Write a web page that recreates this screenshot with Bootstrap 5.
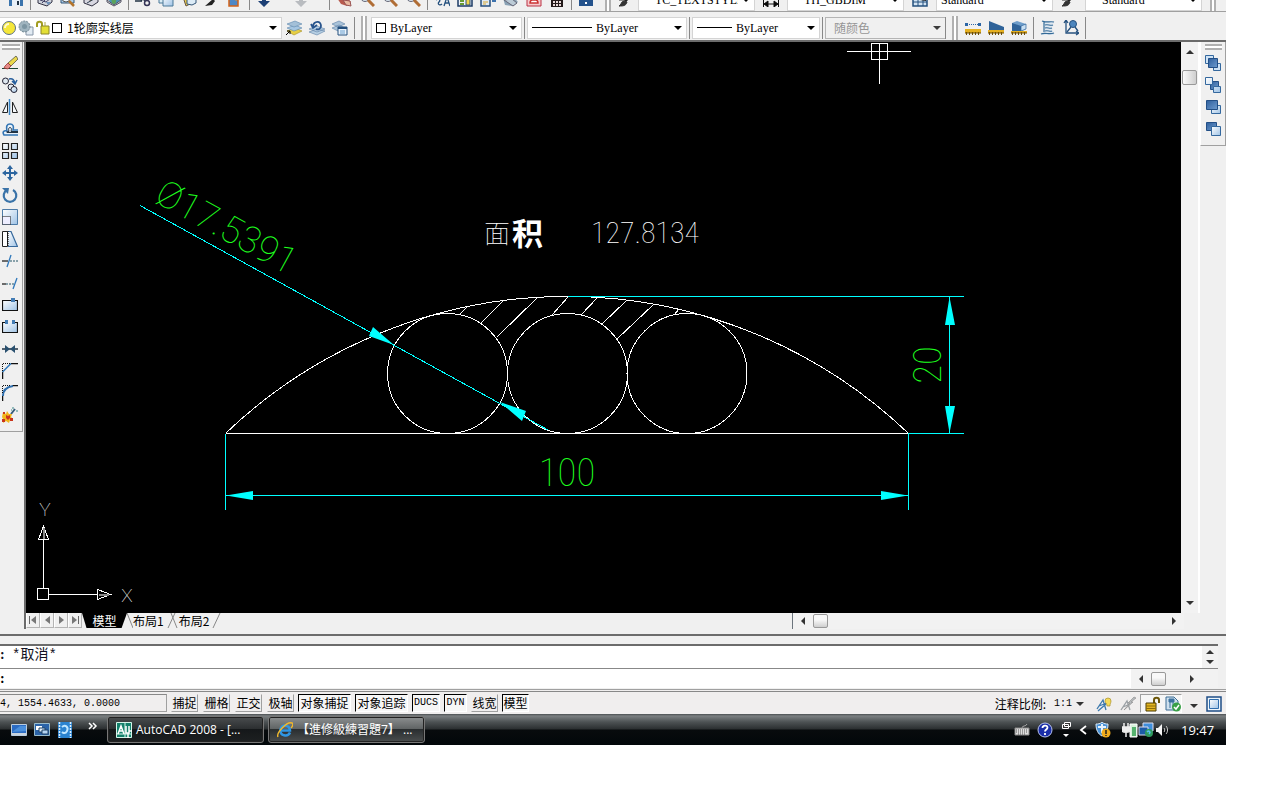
<!DOCTYPE html>
<html lang="zh-CN">
<head>
<meta charset="utf-8">
<meta name="viewport" content="width=device-width, initial-scale=1">
<title>AutoCAD 2008</title>
<link href="https://cdn.jsdelivr.net/npm/bootstrap@5.3.0/dist/css/bootstrap.min.css" rel="stylesheet">
<script src="https://cdn.jsdelivr.net/npm/bootstrap@5.3.0/dist/js/bootstrap.bundle.min.js"></script>
<style>
:root{--face:#f0f0f0;--edge:#a0a0a0;--dark:#6c6c6c}
body{background:#fff;font-family:"Liberation Serif","Noto Sans CJK SC",serif;font-size:12px;line-height:14px;color:#000;padding:0 54px 55px 0}
.app{height:calc(100vh - 55px);background:var(--face)}
button{padding:0;border:0;background:none;color:inherit;font:inherit;line-height:inherit}
svg{display:block}
.tb{width:16px;height:16px;flex:none}
.tb svg,.ic{width:16px;height:16px;flex:none}
.tiny{width:7px;height:16px;flex:none}
.bar-top{height:12px;overflow:hidden;border-bottom:1px solid var(--edge)}
.bar-props{height:30px;padding-top:3px;border-bottom:2px solid var(--dark)}
.tools{gap:7px}
.rule{width:1px;height:22px;background:#888;flex:none;margin:0 -1px}
.rule.wide{margin:0 2px}
.grip{width:6px;height:24px;border-left:2px solid #b0b0b0;border-right:2px solid #b0b0b0;background:#fff;flex:none}
.grip-h{height:6px;border-top:2px solid #b0b0b0;border-bottom:2px solid #b0b0b0;background:#fff}
.field{background:#fff;border:1px solid #d4d4d4;height:22px;flex:none}
.field select{border:0;outline:0;padding:0 16px 0 0;min-width:0;height:20px;font:inherit;color:inherit;appearance:none;background:transparent url("data:image/svg+xml,%3Csvg xmlns='http://www.w3.org/2000/svg' width='8' height='4'%3E%3Cpath d='M0 0h8L4 4z'/%3E%3C/svg%3E") no-repeat right 4px center}
.field.off{background:var(--face);color:#8a8a8a;border-color:#b4b4b4}
.field.off select{opacity:.75;color:#777}
.field select.cjk,.cjk{font-family:"Noto Sans CJK SC",sans-serif}
.w-layer{width:282px;padding-left:1px;gap:1px}.w-color{width:151px}.w-ltype{width:160px}.w-lw{width:128px}.w-plot{width:121px}
.w-style{width:117px}
.swatch{width:10px;height:10px;border:1px solid #000;background:#fff;flex:none}
.rail-left{width:26px;border-right:2px solid var(--dark);flex:none}
.rail-left .dock{width:23px;height:390px;border-right:1px solid var(--edge);border-bottom:1px solid var(--edge);padding:2px 2px 0 2px}
.rail-right{width:26px;flex:none}
.rail-right .dock{height:104px;border:1px solid var(--edge);border-top:0;border-left-color:#fff;padding:2px 3px 0 4px}
.rail-left .tools,.rail-right .tools{gap:6px;padding-top:5px}
.view{background:#000;min-width:0}
.sbar{background:#f2f2f2;flex:none}
.sbar.v{width:19px;border-right:2px solid #fff}
.sbar.foot{width:32%}
.thumb{background:linear-gradient(90deg,#fbfbfb,#cfcfcf);border:1px solid #999;border-radius:2px;width:15px;height:15px;flex:none}
.thumb.h{background:linear-gradient(#f8f8f8 40%,#cfcfcf);height:14px}
.arr{width:0;height:0;border:4px solid transparent;flex:none}
.arr.u{border-top:0;border-bottom-color:#333}.arr.d{border-bottom:0;border-top-color:#333}
.arr.l{border-left:0;border-right-color:#333}.arr.r{border-right:0;border-left-color:#333}
.tabs{height:16px}
.tabs .vcr{width:14px;height:15px;border:1px solid #b4b4b4;border-top:0;border-left-color:#fff;display:grid;place-items:center}
.tabs .sheet{height:15px;width:46px;font-family:"Noto Sans CJK SC",sans-serif;text-align:center}
.tabs .on{background:#000;color:#fff;clip-path:polygon(0 0,100% 0,88% 100%,10% 100%);width:45px}
.cmdwrap{border-top:2px solid var(--dark);padding-top:8px;margin-top:5px}
.hist{height:25px;border-top:2px solid var(--dark);background:#fff;border-bottom:1px solid #888}
.line{font:14px/18px "Liberation Mono","Noto Sans CJK SC",monospace;color:#112}
.colon{display:inline-block;width:12px;font:700 14px/18px "Liberation Serif",serif}
.prompt{height:19px;background:#fff}
.prompt input{border:0;outline:0;background:transparent;padding:0;min-width:0}
.status{height:25px;margin-top:1px;border-top:1px solid var(--edge);background:#f0eeee}
.status .inner{border-top:1px solid #888;margin-top:1px;padding-top:2px;height:22px}
.coord{width:167px;height:18px;border:1px solid var(--edge);border-left:0;border-top-color:#888;font:10px/18px "Liberation Mono",monospace;white-space:pre}
.tg{height:18px;border:1px solid transparent;border-right-color:var(--edge);border-bottom-color:var(--edge);font:12px/16px "Noto Sans CJK SC",sans-serif;white-space:nowrap;flex:none;text-align:center}
.tg.on{border:1px solid #fff;border-left-color:#000;border-top-color:#000;background:#f6f6f6}
.tg.mono{font:10px/16px "Liberation Mono",monospace}
.t2{width:27px}.t4{width:53px}.t-ducs{width:28px}.t-dyn{width:23px}
.toggles{gap:5px;margin-left:4px}
.toggles.pack{gap:4px}
.scale{font:10px/16px "Liberation Mono",monospace;margin-right:12px}
.pressed{border:1px solid var(--edge);border-right-color:#fff;border-bottom-color:#fff;background:#f6f6f6;height:19px;width:42px}
.task{height:31px;background:linear-gradient(#4a4f52 0,#7b7f81 2px,#4d5254 8px,#2b2f31 15px,#080b0d 16px,#02070a);color:#fff;font-family:"Open Sans","Noto Sans CJK TC",sans-serif}
.task .win{height:27px;width:157px;border:1px solid #777;border-radius:3px;background:linear-gradient(#4a4d4f,#2b2e30 48%,#15181a 50%,#1d2021);box-shadow:inset 0 0 0 1px #222;font-size:12px;padding:0 8px;white-space:nowrap}
.task .win.idle{background:linear-gradient(#8c8f90,#5f6364 48%,#2a2e30 50%,#4a4d4e)}
.quick{width:107px;padding-left:11px;gap:7px}
.clock{font-size:13px;width:37px}
.tray-a{gap:7px;margin-right:11px}
</style>
</head>
<body>
<svg width="0" height="0" class="position-absolute" aria-hidden="true">
<defs>
<linearGradient id="gb" x1="0" y1="0" x2="1" y2="1"><stop offset="0" stop-color="#fff"/><stop offset="1" stop-color="#9fc3e6"/></linearGradient>
<linearGradient id="gd" x1="0" y1="0" x2="1" y2="1"><stop offset="0" stop-color="#2f5f9c"/><stop offset="1" stop-color="#6d9bcf"/></linearGradient>
<symbol id="i-save" viewBox="0 0 16 16"><path d="M1 1h14v14H1z" fill="#3b74ad"/><path d="M4 9h8v6H4z" fill="#e8f0f8"/><path d="M9 10h2v4H9z" fill="#234"/><path d="M3 1h10v6H3z" fill="#cfe1f2"/></symbol>
<symbol id="i-print" viewBox="0 0 16 16"><path d="M1 8l5-4 9 2v5l-5 4-9-3z" fill="#cfd3dc" stroke="#334"/><path d="M3 9l6 2 5-4M5 12l6-6" stroke="#446" fill="none"/><path d="M9 11h5l-3 3z" fill="#6a8fb8"/></symbol>
<symbol id="i-preview" viewBox="0 0 16 16"><path d="M1 2h13v10H1z" fill="#a9cdea" stroke="#357"/><circle cx="6" cy="7" r="4" fill="#eef6fc" stroke="#555"/><path d="M9 10l5 5" stroke="#b3742c" stroke-width="2.500"/></symbol>
<symbol id="i-publish" viewBox="0 0 16 16"><path d="M1 9l5-4 9 2v4l-6 4-8-3z" fill="#d7d7e0" stroke="#334"/><path d="M4 7l5-5 4 3-5 5z" fill="#e9b93b" stroke="#653"/><path d="M4 12l7-4" stroke="#345"/></symbol>
<symbol id="i-globe" viewBox="0 0 16 16"><circle cx="9" cy="8" r="6" fill="#4793b8"/><path d="M1 9l7 5 7-5v2l-7 4-7-4z" fill="#ddd" stroke="#556"/><path d="M5 7c3 0 6 1 5 4s-3 2-4 1z" fill="#5ba35b"/></symbol>
<symbol id="i-cut" viewBox="0 0 16 16"><path d="M3 2l7 8M12 2L6 10" stroke="#345" stroke-width="1.500"/><path d="M0 10h7" stroke="#234" stroke-width="1.500"/><circle cx="12" cy="12" r="2.500" fill="none" stroke="#335" stroke-width="1.500"/></symbol>
<symbol id="i-copy" viewBox="0 0 16 16"><path d="M1 1h9v11H1z" fill="#d9ecf5" stroke="#4a7898"/><path d="M5 4h10v11H5z" fill="url(#gb)" stroke="#4a7898"/></symbol>
<symbol id="i-paste" viewBox="0 0 16 16"><path d="M1 3l8-2 4 10-8 4z" fill="#e9c94b" stroke="#654"/><path d="M6 6h9v6l-4 2-5-1z" fill="#dcebf6" stroke="#357"/></symbol>
<symbol id="i-brush" viewBox="0 0 16 16"><path d="M15 2L8 9" stroke="#333" stroke-width="3"/><path d="M9 8L1 15l7-1 3-4z" fill="#222"/></symbol>
<symbol id="i-block" viewBox="0 0 16 16"><path d="M2 8h9v7H2z" fill="#4f88c6" stroke="#d26118" stroke-width="1.500"/><path d="M8 9l7-8" stroke="#e09030" stroke-width="3"/></symbol>
<symbol id="i-undo" viewBox="0 0 16 16"><path d="M6 4h4v6h4l-6 6-6-6h4z" fill="#1c3f75"/></symbol>
<symbol id="i-redo" viewBox="0 0 16 16"><path d="M6 4h4v6h4l-6 6-6-6h4z" fill="#b9bcc0"/></symbol>
<symbol id="i-pan" viewBox="0 0 16 16"><path d="M1 7l6-4 8 8-4 4-6-2z" fill="#b75a4e"/><path d="M7 9l3 5 5 1-1-5z" fill="#e8b9a0" stroke="#955"/></symbol>
<symbol id="i-zoom" viewBox="0 0 16 16"><circle cx="6" cy="6" r="4.500" fill="#dbe7ef" stroke="#667"/><path d="M9 9l6 6" stroke="#b06d35" stroke-width="3"/></symbol>
<symbol id="i-props" viewBox="0 0 16 16"><path d="M1 1h7v6H1z" fill="#e5c14a"/><path d="M2 9c3-2 5 0 3 2s1 4 3 2M10 15l3-9 3 9M11 12h4" fill="none" stroke="#24507e" stroke-width="1.300"/></symbol>
<symbol id="i-center" viewBox="0 0 16 16"><path d="M1 1h14v14H1z" fill="#eef3f8" stroke="#1d3b66" stroke-width="1.500"/><path d="M3 9h4v2H3zM3 12h4v2H3z" fill="#6a9b33"/><path d="M9 8h4v6H9z" fill="#f0d44d" stroke="#357"/></symbol>
<symbol id="i-palette" viewBox="0 0 16 16"><path d="M1 1h9v14H1z" fill="#dfeaf4" stroke="#27507f" stroke-width="1.500"/><path d="M3 8h5M3 11h5M3 13h3" stroke="#d9a830"/><path d="M12 7h4v4h-4z" fill="#3d72ad"/></symbol>
<symbol id="i-sheet" viewBox="0 0 16 16"><path d="M0 7l7-5 8 9-5 4-8-1z" fill="#8aa2b5"/><path d="M1 9l8-1 5 4-4 3z" fill="#bccbd6" stroke="#667"/></symbol>
<symbol id="i-markup" viewBox="0 0 16 16"><path d="M1 0h14v15H1z" fill="#f6c9cc" stroke="#b34"/><path d="M4 12c0-4 4-3 4-3s4-1 4 3z" fill="#fff" stroke="#c33" stroke-width="1.500"/></symbol>
<symbol id="i-calc" viewBox="0 0 16 16"><path d="M2 0h12v16H2z" fill="#231a1a"/><path d="M4 7h2v2H4zM7 7h2v2H7zM10 7h2v2h-2zM4 10h2v2H4zM7 10h2v2H7zM10 10h2v2h-2zM4 13h2v2H4zM7 13h2v2H7zM10 13h2v2h-2z" fill="#e9dada"/></symbol>
<symbol id="i-help" viewBox="0 0 16 16"><path d="M1 0h14v15H1z" fill="#24528c"/><path d="M6 4c0-3 5-2 4 1-1 2-2 2-2 4M8 11v2" stroke="#fff" stroke-width="2" fill="none"/></symbol>
<symbol id="i-style" viewBox="0 0 16 16"><path d="M15 2L7 10" stroke="#222" stroke-width="3"/><path d="M1 15c2 0 2-5 5-5l3 1c-1 4-4 4-8 4zM1 9h6" fill="#333" stroke="#333"/></symbol>
<symbol id="i-dim" viewBox="0 0 16 16"><path d="M.5 8v8M15.500 8v8M0 13h16M1 13l4-3v6zM15 13l-4-3v6z" fill="#000" stroke="#111"/><path d="M4 8l6-5 2 5z" fill="#333"/></symbol>
<symbol id="i-table" viewBox="0 0 16 16"><path d="M1 3h14v12H1z" fill="#d2e3f2" stroke="#24507e" stroke-width="1.500"/><path d="M1 11h14M6 7v8M11 7v8M3 7h12" stroke="#24507e"/><path d="M8 9l6-5v6z" fill="#222"/></symbol>
<symbol id="i-bulb" viewBox="0 0 16 16"><circle cx="8" cy="8" r="6.500" fill="#f5e73a" stroke="#5d7187"/><path d="M4 8a4 4 0 014-4" stroke="#fffbd0" stroke-width="2" fill="none"/></symbol>
<symbol id="i-vp" viewBox="0 0 16 16"><path d="M8 7h7v8H8z" fill="#e2ebf3" stroke="#8796a8"/><circle cx="6.500" cy="6.500" r="5.500" fill="#9fb4bf" stroke="#728894" stroke-dasharray="2 1"/><circle cx="6.500" cy="6.500" r="2.500" fill="#7c96a3"/></symbol>
<symbol id="i-lock" viewBox="0 0 16 16"><path d="M2 7V4c0-3 5-3 5 0v4" fill="none" stroke="#a29c20" stroke-width="2"/><path d="M6 6h8v8H6z" fill="#e3df35" stroke="#8b862a"/><path d="M10 6V2" stroke="#aaa543"/></symbol>
<symbol id="i-layers" viewBox="0 0 16 16"><path d="M1 11l8-3 7 3-8 4z" fill="#e7cf45" stroke="#a48f22" stroke-width=".6"/><path d="M1 8l8-3 7 3-8 3z" fill="#a5c6e2" stroke="#5d86ad" stroke-width=".6"/><path d="M1 4l8-3 7 3-8 3z" fill="#a3c0d8" stroke="#5d86ad" stroke-width=".6"/><path d="M0 15l4-4M1 11h3v3" stroke="#000" fill="none"/></symbol>
<symbol id="i-lprev" viewBox="0 0 16 16"><path d="M0 12l8-3 8 2-8 4zM0 9l8-3 8 3-8 3z" fill="#b7cfe3" stroke="#5d7fa6" stroke-width=".6"/><path d="M4 6c1-5 8-6 8 0 0 3-3 4-5 3M2 4l2 4 4-3" fill="none" stroke="#28548c" stroke-width="1.800"/></symbol>
<symbol id="i-lstate" viewBox="0 0 16 16"><path d="M0 8l7-3 6 3-7 3zM0 4l7-3 6 3-7 3z" fill="#aac3d9" stroke="#5d7fa6" stroke-width=".6"/><path d="M6 7h9v8H6z" fill="#eaf3fb" stroke="#24507e"/><path d="M6 8h9" stroke="#24507e" stroke-width="2"/><path d="M8 11h5M8 13h5" stroke="#6aa0cf"/></symbol>
<symbol id="i-dist" viewBox="0 0 16 16"><path d="M0 3h3v3H0zM13 3h3v3h-3z" fill="#2b65a5"/><path d="M4 4.500h9" stroke="#2b65a5" stroke-dasharray="1 1"/><path d="M0 9h16v4H0z" fill="#e5b020"/><path d="M1.500 12v3M4.500 12v3M7.500 12v3M10.500 12v3M13.500 12v3M0 13h16" stroke="#6d4f08"/></symbol>
<symbol id="i-area" viewBox="0 0 16 16"><path d="M1 1l15 6v4H1z" fill="#2f6399"/><path d="M0 10h16v3H0z" fill="#e5b020"/><path d="M1.500 12v3M4.500 12v3M7.500 12v3M10.500 12v3M13.500 12v3M0 13h16" stroke="#6d4f08"/></symbol>
<symbol id="i-mass" viewBox="0 0 16 16"><path d="M1 3l5-2 9 3v5l-4 2H1z" fill="#6f9ecb"/><path d="M1 3l9 3v5H1z" fill="#2f6399"/><path d="M10 6l5-2v5l-5 2z" fill="#c8dff2" stroke="#2f6399" stroke-width=".7"/><path d="M0 11h16v2H0z" fill="#e5b020"/><path d="M1.500 12v3M4.500 12v3M7.500 12v3M10.500 12v3M13.500 12v3M0 13h16" stroke="#6d4f08"/></symbol>
<symbol id="i-list" viewBox="0 0 16 16"><path d="M3 1l11 1-2 6 2 7H1l4-4-1-5z" fill="#dfe8f0"/><path d="M2 1c4 2 8 0 12 1M5 5c3-1 5 1 8 0M5 8c3-1 4 1 7 0M5 11c3-1 5 1 7 0M1 14c4-2 8 1 13-1M4 1v11" fill="none" stroke="#336a97" stroke-width="1.200"/></symbol>
<symbol id="i-locate" viewBox="0 0 16 16"><path d="M3 0v13h13M1 3l2-3 2 3M13 11l3 2-3 2" fill="none" stroke="#24507e" stroke-width="1.300"/><circle cx="10" cy="4" r="3.500" fill="#4d86be" stroke="#24507e"/><path d="M8 7l-4 5M12 7l3 4" stroke="#24507e" stroke-width="1.300"/></symbol>
<symbol id="m-erase" viewBox="0 0 16 16"><path d="M0 13.500h16" stroke="#1b4434"/><path d="M14 1l2 3-7 7-3-3z" fill="#ead84c" stroke="#554" stroke-width=".8"/><path d="M6 8l3 3-3 3-4-1 1-2z" fill="#e58a86" stroke="#933" stroke-width=".8"/></symbol>
<symbol id="m-copy" viewBox="0 0 16 16"><circle cx="3.500" cy="4" r="3" fill="#dfe8f0" stroke="#223"/><circle cx="9" cy="10" r="3" fill="#dfe8f0" stroke="#223"/><circle cx="12" cy="12.500" r="3" fill="url(#gb)" stroke="#223"/><path d="M7 2c4-1 5 1 6 4M10 4l3 3 2-4" fill="none" stroke="#285f9d" stroke-width="1.500"/></symbol>
<symbol id="m-mirror" viewBox="0 0 16 16"><path d="M7.500 0v16" stroke="#3b85c4" stroke-width="1.500"/><path d="M5.500 3v10.500H.5zM10.500 3v10.500h5z" fill="#f5f8fb" stroke="#222"/></symbol>
<symbol id="m-offset" viewBox="0 0 16 16"><path d="M16 14H2c-2-3 0-5 3-4C4 5 5 3 8 3s4 2 3 6h5" fill="#e9f2fa" stroke="#3375b4" stroke-width="1.600"/><path d="M16 11.500H5c-1-1 0-1 2-1-1-3 0-4 1-4s2 1 1 4h7" fill="none" stroke="#234"/></symbol>
<symbol id="m-array" viewBox="0 0 16 16"><path d="M.5.5h6v6h-6zM9.500.5h6v6h-6zM.5 9.500h6v6h-6zM9.500 9.500h6v6h-6z" fill="url(#gb)" stroke="#222" stroke-width="1.200"/></symbol>
<symbol id="m-move" viewBox="0 0 16 16"><path d="M8 0l3 4H9v3h3V5l4 3-4 3V9H9v3h2l-3 4-3-4h2V9H4v2L0 8l4-3v2h3V4H5z" fill="#2c659f"/></symbol>
<symbol id="m-rotate" viewBox="0 0 16 16"><path d="M5 3a6.300 6.300 0 106 0" fill="none" stroke="#3a73a8" stroke-width="2.200"/><path d="M0 1l7 0-1 6z" fill="#3a73a8"/></symbol>
<symbol id="m-scale" viewBox="0 0 16 16"><path d="M.5.5h15v15H.5z" fill="url(#gb)" stroke="#4d7ba7"/><path d="M.5 7.500h8v8h-8z" fill="#eef" stroke="#111" stroke-dasharray="1 1"/></symbol>
<symbol id="m-stretch" viewBox="0 0 16 16"><path d="M.5.500h5v15h-5z" fill="#fff" stroke="#222"/><path d="M6 .5h3l6.500 15H6" fill="url(#gb)" stroke="#35689c" stroke-width="1.200"/><path d="M6 0v16" stroke="#000" stroke-dasharray="1 1"/></symbol>
<symbol id="m-trim" viewBox="0 0 16 16"><path d="M0 8h6" stroke="#111" stroke-width="1.200"/><path d="M8 8h8" stroke="#256" stroke-dasharray="2 1"/><path d="M9 2L5 14" stroke="#2f78bb" stroke-width="1.300"/></symbol>
<symbol id="m-extend" viewBox="0 0 16 16"><path d="M0 9h4" stroke="#111" stroke-width="1.200"/><path d="M4 9h8" stroke="#256" stroke-dasharray="2 1"/><path d="M15 3l-4 11" stroke="#2f78bb" stroke-width="1.300"/></symbol>
<symbol id="m-breakpt" viewBox="0 0 16 16"><path d="M.5 3.500h15v10H.5z" fill="url(#gb)" stroke="#111" stroke-width="1.200"/><path d="M9 1h4v4H9z" fill="#447db5"/></symbol>
<symbol id="m-break" viewBox="0 0 16 16"><path d="M.5 3.500h15v10H.5z" fill="url(#gb)"/><path d="M3 3.500H.5v10h15v-10H13" fill="none" stroke="#111" stroke-width="1.200"/><path d="M3 1h3v4H3zM10 1h3v4h-3z" fill="#447db5"/></symbol>
<symbol id="m-join" viewBox="0 0 16 16"><path d="M0 8h16" stroke="#234" stroke-width="1.500"/><path d="M3 4l5 4-5 4zM13 4L8 8l5 4z" fill="#29506f"/></symbol>
<symbol id="m-chamfer" viewBox="0 0 16 16"><path d="M.5 16V9M9 .5h7" stroke="#111" stroke-width="1.500"/><path d="M.5 9L9 .5" stroke="#2f78bb" stroke-width="1.500"/><path d="M.5 8V.5H9" fill="none" stroke="#111" stroke-dasharray="1 1"/></symbol>
<symbol id="m-fillet" viewBox="0 0 16 16"><path d="M.5 16v-5M10 .500h6" stroke="#111" stroke-width="1.500"/><path d="M1 11C1 5 4 2 11 1" fill="none" stroke="#2f6fae" stroke-width="2"/><path d="M.5 8V.5H9" fill="none" stroke="#111" stroke-dasharray="1 1"/></symbol>
<symbol id="m-explode" viewBox="0 0 16 16"><path d="M9 7l4-5" stroke="#345a78" stroke-width="2"/><path d="M10 1h2M14 4h2M9 3h1" stroke="#7aa" stroke-width="1.500"/><path d="M1 5l3 2 1-3 2 3 3 0-1 3 2 2-3 1-1 3-3-2-3 2 0-4-1-2z" fill="#f2b61b"/><path d="M4 8l2 1 2-1 0 3-2 2-2-2zM0 12h3v3H0zM1 5h2v2H1zM8 11h3v3H8z" fill="#c9341c"/></symbol>
<symbol id="o-1" viewBox="0 0 16 16"><path d="M.5.5h8v8h-8zM8.500 8.500h7v7h-7z" fill="#cfe3f5" stroke="#34689e"/><path d="M3.500 3.500h9v9h-9z" fill="url(#gd)" stroke="#234f86"/></symbol>
<symbol id="o-2" viewBox="0 0 16 16"><path d="M5.500 4.500h8v8h-8z" fill="url(#gd)" stroke="#234f86"/><path d="M.5.5h7v7h-7zM8.500 9.500h7v6h-7z" fill="url(#gb)" stroke="#34689e"/></symbol>
<symbol id="o-3" viewBox="0 0 16 16"><path d="M6.500 6.500h9v8h-9z" fill="url(#gb)" stroke="#34689e"/><path d="M1.500 1.500h11v9h-11z" fill="url(#gd)" stroke="#234f86"/></symbol>
<symbol id="o-4" viewBox="0 0 16 16"><path d="M1.500 1.500h10v8h-10z" fill="url(#gd)" stroke="#234f86"/><path d="M6.500 5.500h9v9h-9z" fill="url(#gb)" stroke="#34689e"/></symbol>
<symbol id="s-anno" viewBox="0 0 16 16"><path d="M1 13l6-9 3 10M3 10l8-3M2 15l8-7" fill="none" stroke="#3c79ad" stroke-width="1.300"/><path d="M9 5a3 3 0 116 0c0 2-1 2-1 5h-3c0-3-2-3-2-5z" fill="#f5dc5a" stroke="#a98f2a" stroke-width=".7"/></symbol>
<symbol id="s-auto" viewBox="0 0 16 16"><path d="M1 14l6-9 3 9M3 11l7-3" fill="none" stroke="#9aa0a5" stroke-width="1.300"/><path d="M14 1L8 7l2 0-6 7 9-8h-2l5-4z" fill="#b7bbbe" stroke="#888" stroke-width=".6"/></symbol>
<symbol id="s-lock" viewBox="0 0 16 16"><path d="M9 8V4c0-3 5-3 5 0v3" fill="none" stroke="#6b5608" stroke-width="2"/><path d="M1 7h10v8H1z" fill="#e2b521" stroke="#4e3e05"/><path d="M1 10h10M1 12.500h10" stroke="#8d6c08"/></symbol>
<symbol id="s-std" viewBox="0 0 16 16"><path d="M1 1h8l4 4v9H1z" fill="#cfe0ee" stroke="#3d6d95"/><path d="M4 3h5v3H4zM5 5v7M8 5v7" fill="#3c729f" stroke="#3c729f"/><circle cx="11.500" cy="11" r="4.500" fill="#39a046"/><path d="M9 11l2 2 3-4" fill="none" stroke="#fff" stroke-width="1.500"/></symbol>
<symbol id="s-clean" viewBox="0 0 16 16"><path d="M1 1h14v14H1z" fill="#eef5fb" stroke="#1f4d87" stroke-width="1.500"/><path d="M3.500 3.500h9v9h-9z" fill="url(#gb)" stroke="#2f6dad"/></symbol>
<symbol id="k-desk" viewBox="0 0 16 16"><path d="M.5 2.500h15v11H.5z" fill="#2b6cc4" stroke="#bcd"/><path d="M1 10l8-6h6v5z" fill="#4a8fdc"/><path d="M1 11h14v2H1z" fill="#c8d4df"/></symbol>
<symbol id="k-flip" viewBox="0 0 16 16"><path d="M.5 1.500h15v12H.5z" fill="#2b63a8" stroke="#9bc"/><path d="M2 4h6v4H2z" fill="#fff"/><path d="M5 6h6v4H5z" fill="#dcebfa" stroke="#246"/><path d="M8 8h6v4H8z" fill="#b5d4f3" stroke="#246"/></symbol>
<symbol id="k-media" viewBox="0 0 16 16"><path d="M1 0h14v16H1z" fill="#2b83cf"/><path d="M2.500 0v16M13.500 0v16" stroke="#dff0ff" stroke-width="1.500" stroke-dasharray="2 1"/><path d="M5 5c3-3 7 0 5 4s-5 1-5 1" fill="none" stroke="#bfe6ff" stroke-width="2"/></symbol>
<symbol id="k-acad" viewBox="0 0 16 16"><path d="M0 0h16v16H0z" fill="#13806b"/><path d="M.5.5h15v15H.5zM9 0v16M0 12h16" fill="none" stroke="#d5f5ea"/><path d="M2 12l3-8 3 8M3 9h4M10 4v7h3V4M13 9h3M12 11v5" fill="none" stroke="#fff" stroke-width="1.500"/></symbol>
<symbol id="k-ie" viewBox="0 0 16 16"><path d="M13 10.500A5 5 0 118 3.500a5 5 0 015 5H4" fill="none" stroke="#2f96e3" stroke-width="2.500"/><path d="M1 15C-1 11 10-1 15 1c2 1 0 4-1 5" fill="none" stroke="#f2b92b" stroke-width="1.400"/></symbol>
<symbol id="k-kbd" viewBox="0 0 16 16"><path d="M8 6C8 3 12 5 13 2" fill="none" stroke="#aaa"/><path d="M1 6h14v7H1z" fill="#ddd" stroke="#888"/><path d="M2 8h12M2 10h12M4 12h8" stroke="#555" stroke-dasharray="1 1"/></symbol>
<symbol id="k-help" viewBox="0 0 16 16"><circle cx="8" cy="8" r="7" fill="#1a2ea8" stroke="#b9c4ee"/><path d="M5.500 6c0-3 5-3 5-.5 0 2-2.500 2-2.500 4M8 11v2" fill="none" stroke="#fff" stroke-width="1.800"/></symbol>
<symbol id="k-shield" viewBox="0 0 16 16"><path d="M7 0c2 2 4 2 6 2 0 6-2 10-6 12C3 12 1 8 1 2c2 0 4 0 6-2z" fill="#4a93d8" stroke="#dbe9f5"/><path d="M7 2v9M3 5h8" stroke="#e8f4ff" stroke-width="2"/><circle cx="11" cy="11" r="4.500" fill="#f1ac1d"/><path d="M11 8v4M11 13v1" stroke="#222" stroke-width="1.500"/></symbol>
<symbol id="k-power" viewBox="0 0 16 16"><path d="M8 2h7v13H8z" fill="#d7f0dc" stroke="#fff"/><path d="M10 5h4v9h-4z" fill="#56b36f"/><path d="M2 1v4M6 1v4M0 5h8v3c0 3-8 3-8 0zM4 10v5" fill="#eee" stroke="#eee" stroke-width="1.500"/></symbol>
<symbol id="k-net" viewBox="0 0 16 16"><path d="M5 1h10v8H5z" fill="#3f8edb" stroke="#dde"/><path d="M1 5h9v8H1z" fill="#1c5ca8" stroke="#dde"/><circle cx="11" cy="11" r="4" fill="#2f9a5e"/><path d="M9 10c2-2 4 0 2 2" stroke="#5ac0f0" fill="none" stroke-width="1.500"/></symbol>
<symbol id="k-vol" viewBox="0 0 16 16"><path d="M2 6h2l4-4v12l-4-4H2z" fill="#f4f4f4"/><path d="M10 6c1 1 1 3 0 4M12 4c2 2 2 6 0 8" fill="none" stroke="#ccc"/></symbol>
</defs>
</svg>

<main class="app d-flex flex-column">
  <div class="bar-top d-flex align-items-end" role="toolbar" aria-label="标准">
    <div class="tools d-flex align-items-center ps-2">
      <button class="tb" aria-label="保存"><svg><use href="#i-save"/></svg></button>
      <span class="rule"></span>
      <button class="tb" aria-label="打印"><svg><use href="#i-print"/></svg></button>
      <button class="tb" aria-label="打印预览"><svg><use href="#i-preview"/></svg></button>
      <button class="tb" aria-label="发布"><svg><use href="#i-publish"/></svg></button>
      <button class="tb" aria-label="三维 DWF"><svg><use href="#i-globe"/></svg></button>
      <span class="rule"></span>
      <button class="tb" aria-label="剪切"><svg><use href="#i-cut"/></svg></button>
      <button class="tb" aria-label="复制"><svg><use href="#i-copy"/></svg></button>
      <button class="tb" aria-label="粘贴"><svg><use href="#i-paste"/></svg></button>
      <button class="tb" aria-label="特性匹配"><svg><use href="#i-brush"/></svg></button>
      <button class="tb" aria-label="块编辑器"><svg><use href="#i-block"/></svg></button>
      <span class="rule"></span>
      <button class="tb" aria-label="放弃"><svg><use href="#i-undo"/></svg></button>
      <span class="tiny"></span>
      <button class="tb" aria-label="重做"><svg><use href="#i-redo"/></svg></button>
      <span class="tiny"></span>
      <span class="rule"></span>
      <button class="tb" aria-label="平移"><svg><use href="#i-pan"/></svg></button>
      <button class="tb" aria-label="实时缩放"><svg><use href="#i-zoom"/></svg></button>
      <button class="tb" aria-label="窗口缩放"><svg><use href="#i-zoom"/></svg></button>
      <button class="tb" aria-label="缩放上一个"><svg><use href="#i-zoom"/></svg></button>
      <span class="rule"></span>
      <button class="tb" aria-label="特性"><svg><use href="#i-props"/></svg></button>
      <button class="tb" aria-label="设计中心"><svg><use href="#i-center"/></svg></button>
      <button class="tb" aria-label="工具选项板"><svg><use href="#i-palette"/></svg></button>
      <button class="tb" aria-label="图纸集"><svg><use href="#i-sheet"/></svg></button>
      <button class="tb" aria-label="标记集"><svg><use href="#i-markup"/></svg></button>
      <button class="tb" aria-label="计算器"><svg><use href="#i-calc"/></svg></button>
      <span class="rule"></span>
      <button class="tb" aria-label="帮助"><svg><use href="#i-help"/></svg></button>
      <span class="grip ms-1"></span>
      <button class="tb" aria-label="文字样式"><svg><use href="#i-style"/></svg></button>
    </div>
    <div class="field d-flex w-style ms-1 ps-3"><select class="flex-grow-1" aria-label="文字样式"><option>TC_TEXTSTYLE</option></select></div>
    <button class="tb mb-1 ms-2" aria-label="标注样式"><svg><use href="#i-dim"/></svg></button>
    <div class="field d-flex w-style ms-2 ps-3"><select class="flex-grow-1" aria-label="标注样式"><option>TH_GBDIM</option></select></div>
    <button class="tb mb-1 ms-2" aria-label="表格样式"><svg><use href="#i-table"/></svg></button>
    <div class="field d-flex w-style ms-2 ps-1"><select class="flex-grow-1" aria-label="表格样式"><option>Standard</option></select></div>
    <button class="tb mb-1 ms-2" aria-label="多重引线样式"><svg><use href="#i-style"/></svg></button>
    <div class="field d-flex w-style ms-2 ps-3"><select class="flex-grow-1" aria-label="多重引线样式"><option>Standard</option></select></div>
    <span class="grip ms-2"></span>
  </div>

  <div class="bar-props d-flex align-items-center" role="toolbar" aria-label="图层与特性">
    <div class="field w-layer d-flex align-items-center border-start-0">
      <svg class="ic"><use href="#i-bulb"/></svg><svg class="ic"><use href="#i-vp"/></svg><svg class="ic"><use href="#i-lock"/></svg><span class="swatch"></span>
      <select class="flex-grow-1 ms-1 cjk" aria-label="图层"><option>1轮廓实线层</option></select>
    </div>
    <div class="tools d-flex align-items-center ps-1">
      <button class="tb" aria-label="图层特性管理器"><svg><use href="#i-layers"/></svg></button>
      <button class="tb" aria-label="上一个图层"><svg><use href="#i-lprev"/></svg></button>
      <button class="tb" aria-label="图层状态管理器"><svg><use href="#i-lstate"/></svg></button>
      <span class="rule"></span>
      <span class="grip"></span>
    </div>
    <div class="field w-color d-flex align-items-center ms-1 ps-1"><span class="swatch"></span><select class="flex-grow-1 ms-1" aria-label="颜色"><option>ByLayer</option></select></div>
    <span class="rule wide"></span>
    <div class="field w-ltype d-flex align-items-center ps-1"><svg width="60" height="1"><path d="M0 .5h60" stroke="#000"/></svg><select class="flex-grow-1 ms-1" aria-label="线型"><option>ByLayer</option></select></div>
    <span class="rule wide"></span>
    <div class="field w-lw d-flex align-items-center ps-1"><svg width="35" height="1"><path d="M0 .5h35" stroke="#000"/></svg><select class="flex-grow-1 ms-1" aria-label="线宽"><option>ByLayer</option></select></div>
    <span class="rule wide"></span>
    <div class="field w-plot d-flex align-items-center ps-2 off"><select class="flex-grow-1 cjk" aria-label="打印样式" disabled><option>随颜色</option></select></div>
    <div class="tools d-flex align-items-center">
      <span class="rule"></span>
      <span class="grip"></span>
      <button class="tb" aria-label="距离"><svg><use href="#i-dist"/></svg></button>
      <button class="tb" aria-label="面积"><svg><use href="#i-area"/></svg></button>
      <button class="tb" aria-label="质量特性"><svg><use href="#i-mass"/></svg></button>
      <span class="rule"></span>
      <button class="tb" aria-label="列表"><svg><use href="#i-list"/></svg></button>
      <button class="tb" aria-label="定位点"><svg><use href="#i-locate"/></svg></button>
      <span class="rule"></span>
    </div>
  </div>

  <div class="d-flex flex-grow-1" style="min-height:0">
    <div class="rail-left">
      <div class="dock">
        <div class="grip-h"></div>
        <div class="tools d-flex flex-column" role="toolbar" aria-label="修改">
          <button class="tb" aria-label="删除"><svg><use href="#m-erase"/></svg></button>
          <button class="tb" aria-label="复制"><svg><use href="#m-copy"/></svg></button>
          <button class="tb" aria-label="镜像"><svg><use href="#m-mirror"/></svg></button>
          <button class="tb" aria-label="偏移"><svg><use href="#m-offset"/></svg></button>
          <button class="tb" aria-label="阵列"><svg><use href="#m-array"/></svg></button>
          <button class="tb" aria-label="移动"><svg><use href="#m-move"/></svg></button>
          <button class="tb" aria-label="旋转"><svg><use href="#m-rotate"/></svg></button>
          <button class="tb" aria-label="缩放"><svg><use href="#m-scale"/></svg></button>
          <button class="tb" aria-label="拉伸"><svg><use href="#m-stretch"/></svg></button>
          <button class="tb" aria-label="修剪"><svg><use href="#m-trim"/></svg></button>
          <button class="tb" aria-label="延伸"><svg><use href="#m-extend"/></svg></button>
          <button class="tb" aria-label="打断于点"><svg><use href="#m-breakpt"/></svg></button>
          <button class="tb" aria-label="打断"><svg><use href="#m-break"/></svg></button>
          <button class="tb" aria-label="合并"><svg><use href="#m-join"/></svg></button>
          <button class="tb" aria-label="倒角"><svg><use href="#m-chamfer"/></svg></button>
          <button class="tb" aria-label="圆角"><svg><use href="#m-fillet"/></svg></button>
          <button class="tb" aria-label="分解"><svg><use href="#m-explode"/></svg></button>
        </div>
      </div>
    </div>

    <div class="view flex-grow-1">
      <svg class="w-100 h-100" viewBox="26 42 1155 571" preserveAspectRatio="xMidYMid meet" role="img" aria-label="图形">
        <g fill="none" stroke="#fff" shape-rendering="crispEdges">
          <path d="M847 51.500h64M879.500 43v41M871.500 43.500h16v16h-16z"/>
          <path d="M225.500 433.500h683M226 433A494 494 0 01908 433"/>
          <circle cx="447.500" cy="373.500" r="60"/><circle cx="567.500" cy="373.500" r="60"/><circle cx="687" cy="373.500" r="60"/>
          <path d="M459 315l8-8M481 323l23-23M497 337l40-39M552 315l16-18M581 315l17-18M602 324l24-23M617 339l36-34M674 315l5-6"/>
          <path d="M37.500 588.500h11v11h-11zM43.500 588v-48M43.500 526l-5 13.500h10zM49 594.500h48M97.500 589.500v10l13-5z"/>
          <path d="M43.500 528v11M99 594.500h10" stroke="#888" stroke-width="2"/>
        </g>
        <g fill="none" stroke="#0ff" shape-rendering="crispEdges">
          <path d="M140 205.500L548 430M568 296.500h396M908 433.500h56M949.500 297v136M225.500 434v76M908.500 434v76M226 495.500h682"/>
        </g>
        <path fill="#0ff" d="M394 345l-21-18-4 9zM500 402l26 9-4 10zM949.500 297l-4.500 28h10zM949.500 433l-4.500-27h10zM226 495.500l27-4.500v9zM908 495.500l-27-4.500v9z"/>
        <g font-family="Roboto, sans-serif" font-weight="100">
          <g fill="#1fff1f">
            <text transform="translate(153 201) rotate(28.8)" font-size="37">Ø17.5391</text>
            <text x="567" y="486" font-size="39" text-anchor="middle" font-family="Roboto Condensed, sans-serif">100</text>
            <text transform="translate(941 365) rotate(-90)" font-size="39" text-anchor="middle" font-family="Roboto Condensed, sans-serif">20</text>
          </g>
          <g fill="#fff">
            <text x="591" y="243" font-size="30" font-family="Roboto Condensed, sans-serif">127.8134</text>
            <text x="484" y="243" font-size="26" font-family="Noto Sans CJK SC, sans-serif">面</text>
            <text x="512" y="245" font-size="31" font-weight="700" font-family="Noto Sans CJK SC, sans-serif">积</text>
            <text x="45" y="516" font-size="19" text-anchor="middle">Y</text>
            <text x="127" y="602" font-size="19" text-anchor="middle">X</text>
          </g>
        </g>
      </svg>
    </div>
    <div class="sbar v d-flex flex-column align-items-center py-2">
      <span class="arr u"></span><span class="thumb mt-3"></span><span class="arr d mt-auto"></span>
    </div>
    <div class="rail-right">
      <div class="dock">
        <div class="grip-h"></div>
        <div class="tools d-flex flex-column" role="toolbar" aria-label="绘图次序">
          <button class="tb" aria-label="前置"><svg><use href="#o-1"/></svg></button>
          <button class="tb" aria-label="后置"><svg><use href="#o-2"/></svg></button>
          <button class="tb" aria-label="置于对象之上"><svg><use href="#o-3"/></svg></button>
          <button class="tb" aria-label="置于对象之下"><svg><use href="#o-4"/></svg></button>
        </div>
      </div>
    </div>
  </div>

  <div class="tabs d-flex">
    <div class="rail-left"></div>
    <div class="d-flex flex-grow-1">
      <button class="vcr" aria-label="第一个"><svg width="8" height="8"><path d="M.5 0v8" stroke="#666"/><path d="M7 0v8L2 4z" fill="#777"/></svg></button>
      <button class="vcr" aria-label="上一个"><svg width="8" height="8"><path d="M7 0v8L2 4z" fill="#777"/></svg></button>
      <button class="vcr" aria-label="下一个"><svg width="8" height="8"><path d="M2 0v8l5-4z" fill="#777"/></svg></button>
      <button class="vcr" aria-label="最后一个"><svg width="8" height="8"><path d="M7.500 0v8" stroke="#666"/><path d="M1 0v8l5-4z" fill="#777"/></svg></button>
      <button class="sheet on">模型</button>
      <svg width="6" height="15"><path d="M0 0l6 15" stroke="#888"/></svg>
      <button class="sheet w-auto">布局1</button>
      <svg width="15" height="15"><path d="M4 15L11 0M7 0l6 15" fill="none" stroke="#888"/></svg>
      <button class="sheet w-auto">布局2</button>
      <svg width="14" height="15"><path d="M4 15L11 0" stroke="#888"/></svg>
    </div>
    <div class="sbar foot d-flex align-items-center border-start border-secondary ps-2">
      <span class="arr l"></span><span class="thumb h ms-2"></span><span class="arr r ms-auto me-2"></span>
    </div>
    <div class="rail-right ms-3"></div>
  </div>

  <div class="cmdwrap">
    <div class="pe-2">
      <div class="hist d-flex">
        <div class="line flex-grow-1"><span class="colon">:</span>*取消*</div>
        <div class="sbar d-flex flex-column justify-content-between align-items-center px-1 py-1"><span class="arr u"></span><span class="arr d"></span></div>
      </div>
      <div class="prompt d-flex align-items-center">
        <label class="colon" for="cmd">:</label><input id="cmd" class="line flex-grow-1" type="text">
        <div class="sbar d-flex align-items-center gap-2 ps-2 h-100"><span class="arr l"></span><span class="thumb h"></span><span class="arr r ms-3 me-4"></span></div>
      </div>
    </div>
  </div>

  <div class="status">
    <div class="inner d-flex">
      <div class="coord">4, 1554.4633, 0.0000</div>
      <div class="toggles d-flex">
        <button class="tg t2">捕捉</button><button class="tg t2">栅格</button><button class="tg t2">正交</button><button class="tg t2">极轴</button>
      </div>
      <div class="toggles pack d-flex">
        <button class="tg t4 on">对象捕捉</button><button class="tg t4 on">对象追踪</button><button class="tg t-ducs mono on">DUCS</button><button class="tg t-dyn mono on">DYN</button><button class="tg t2">线宽</button><button class="tg t2 on">模型</button>
      </div>
      <div class="d-flex ms-auto align-items-center pe-1">
        <span class="cjk">注释比例:</span>
        <button class="scale ms-2 d-flex align-items-center gap-1"><span>1:1</span><span class="arr d"></span></button>
        <button class="tb me-2" aria-label="注释可见性"><svg><use href="#s-anno"/></svg></button>
        <button class="tb me-1" aria-label="自动添加比例"><svg><use href="#s-auto"/></svg></button>
        <div class="pressed d-flex align-items-center gap-1 ps-1">
          <button class="tb" aria-label="锁定"><svg><use href="#s-lock"/></svg></button><button class="tb" aria-label="标准检查"><svg><use href="#s-std"/></svg></button>
        </div>
        <span class="arr d mx-2 mt-1"></span>
        <button class="tb" aria-label="全屏显示"><svg><use href="#s-clean"/></svg></button>
      </div>
    </div>
  </div>

  <footer class="task d-flex align-items-center">
    <div class="quick d-flex align-items-center">
      <button class="tb" aria-label="显示桌面"><svg><use href="#k-desk"/></svg></button>
      <button class="tb" aria-label="切换窗口"><svg><use href="#k-flip"/></svg></button>
      <button class="tb" aria-label="媒体播放器"><svg><use href="#k-media"/></svg></button>
      <button class="align-self-start ms-2" aria-label="更多"><svg width="10" height="8"><path d="M1 1l3 3-3 3M5 1l3 3-3 3" fill="none" stroke="#fff" stroke-width="1.500"/></svg></button>
    </div>
    <button class="win d-flex align-items-center gap-1"><svg class="ic"><use href="#k-acad"/></svg><span>AutoCAD 2008 - [...</span></button>
    <button class="win idle d-flex align-items-center gap-1 ms-1"><svg class="ic"><use href="#k-ie"/></svg><span>【進修級練習題7】 ...</span></button>
    <div class="tray-a d-flex align-items-center ms-auto">
      <button class="tb" aria-label="键盘"><svg><use href="#k-kbd"/></svg></button>
      <button class="tb" aria-label="语言帮助"><svg><use href="#k-help"/></svg></button>
      <button aria-label="语言栏选项"><svg width="12" height="18"><path d="M4.500 1.500h6v4h-6zM2.500 3.500h6v4h-6z" fill="#333" stroke="#fff"/><path d="M3 13h6l-3 3z" fill="#fff"/></svg></button>
      <button aria-label="显示隐藏图标"><svg width="9" height="10"><path d="M7 1L2 5l5 4" fill="none" stroke="#fff" stroke-width="1.800"/></svg></button>
      <button class="tb me-1" aria-label="安全"><svg><use href="#k-shield"/></svg></button>
      <div class="d-flex">
        <button class="tb" aria-label="电源"><svg><use href="#k-power"/></svg></button>
        <button class="tb" aria-label="网络"><svg><use href="#k-net"/></svg></button>
        <button class="tb" aria-label="音量"><svg><use href="#k-vol"/></svg></button>
      </div>
    </div>
    <time class="clock me-2">19:47</time>
  </footer>
</main>
</body>
</html>
